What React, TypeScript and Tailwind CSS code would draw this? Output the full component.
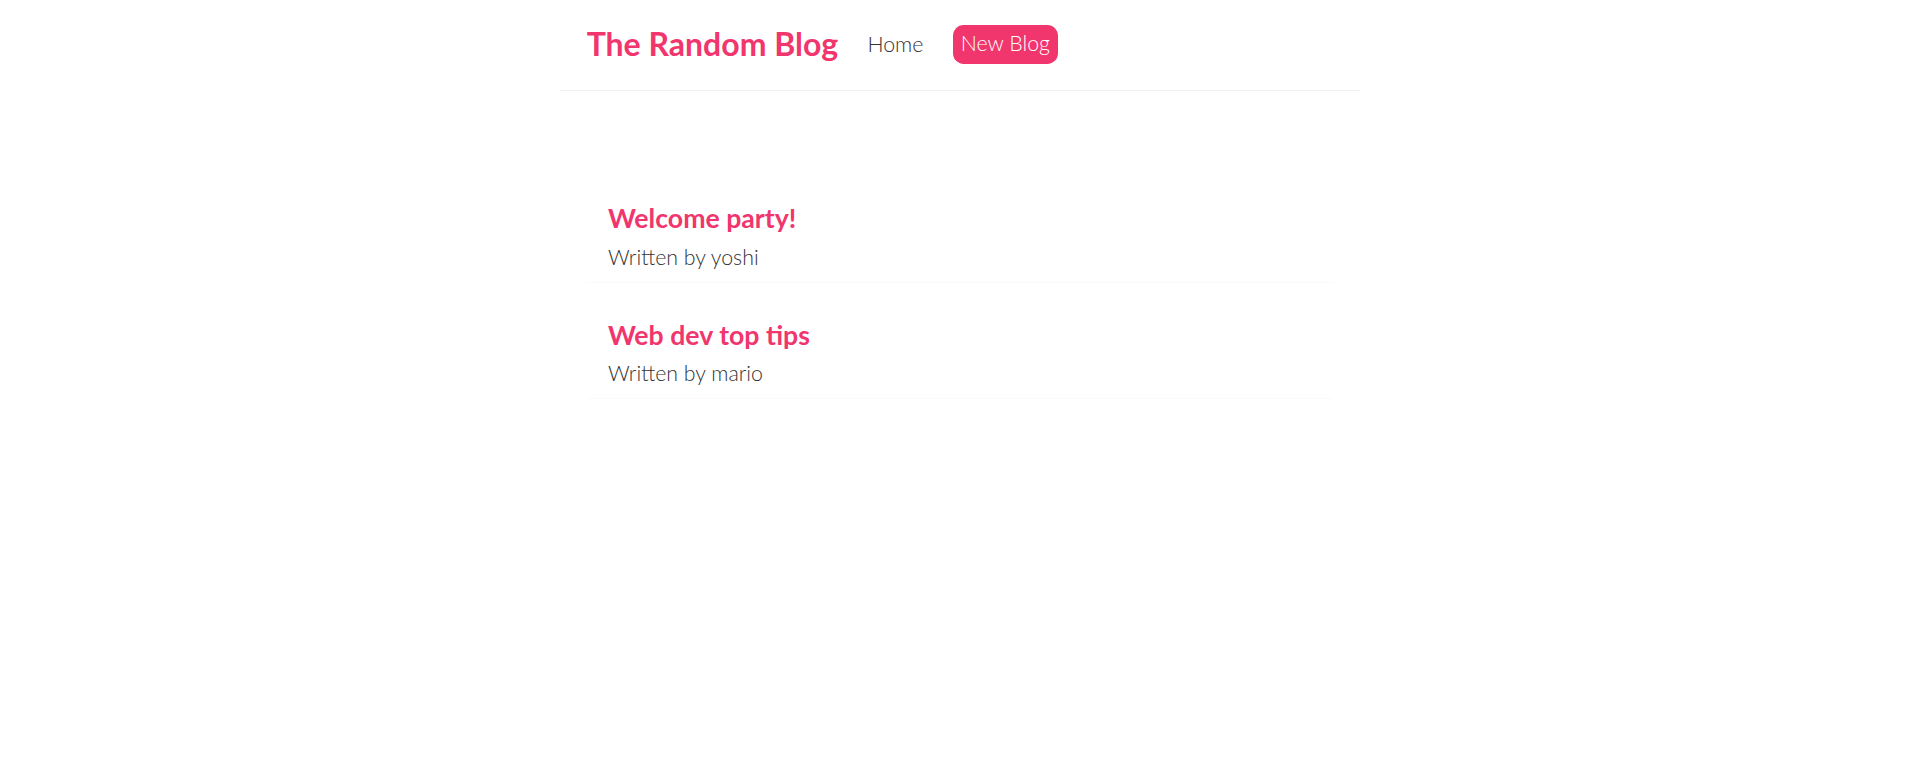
export default function App() {
  const blogs = [
    { title: "Welcome party!", author: "yoshi" },
    { title: "Web dev top tips", author: "mario" },
  ];
  return (
    <div className="min-h-[777px] bg-white text-[#333]" style={{ fontFamily: "Lato, 'Noto Sans', sans-serif" }}>
      <nav className="mx-auto flex h-[91px] w-[800px] items-center border-b border-[#f2f2f2] px-[26.67px] pb-[2px]">
        <h1 className="m-0 text-[32px] font-bold leading-[40px] text-[#f1356d]">The Random Blog</h1>
        <div className="flex items-center">
          <a className="ml-[21.33px] px-[8px] text-[21.33px] font-light leading-[27px] text-[#333]" href="#">Home</a>
          <a className="ml-[21.33px] flex h-[39px] items-center rounded-[10.67px] bg-[#f1356d] px-[8px] text-[21.33px] font-light text-white" href="#">New Blog</a>
        </div>
      </nav>
      <div className="mx-auto mt-[48.7px] w-[800px] p-[26.67px]">
        {blogs.map((b) => (
          <div key={b.title} className="my-[26.67px] border-b border-[#fafafa] px-[21.33px] pt-[9.1px] pb-[10.25px]">
            <h2 className="m-0 mb-[6.5px] text-[26.67px] font-bold leading-[33px] text-[#f1356d]">{b.title}</h2>
            <p className="m-0 text-[21.33px] font-light leading-[30px] text-[#333]">Written by {b.author}</p>
          </div>
        ))}
      </div>
    </div>
  );
}
